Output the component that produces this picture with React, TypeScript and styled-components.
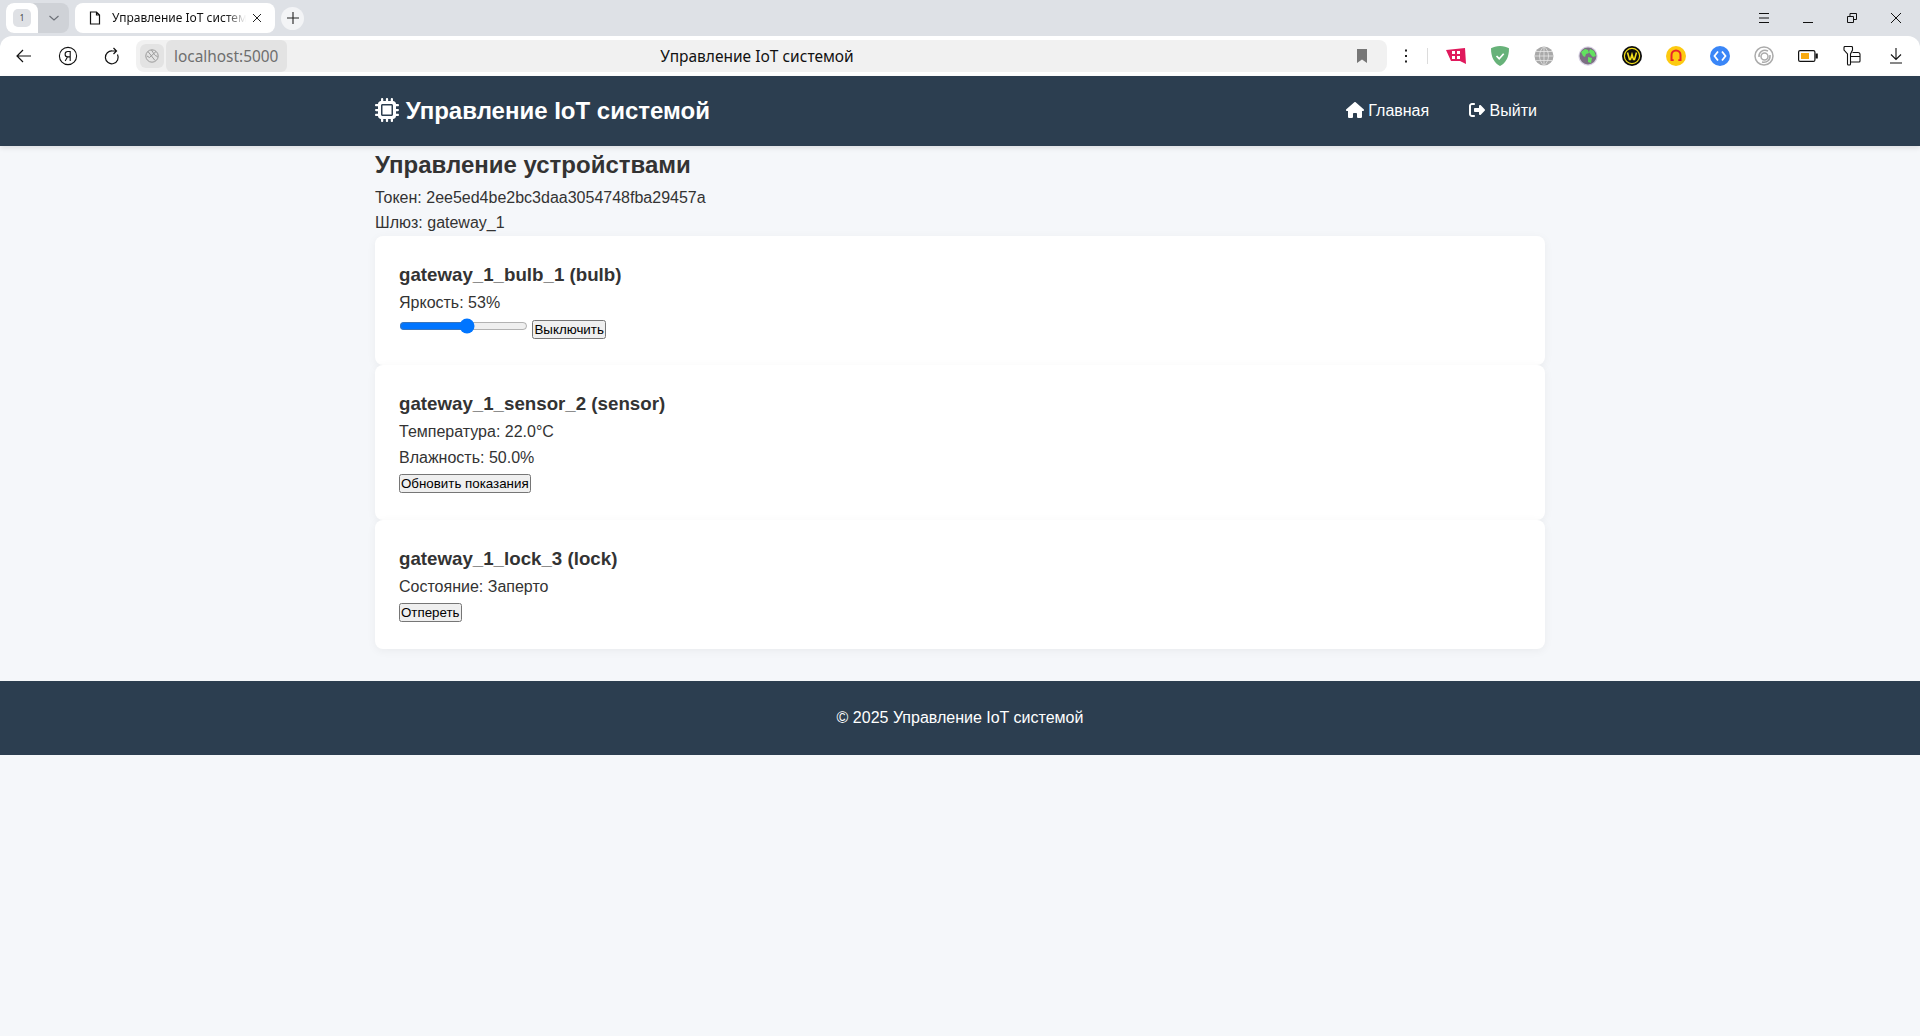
import styled, { createGlobalStyle } from 'styled-components';
import { FaHouse, FaMicrochip, FaRightFromBracket } from 'react-icons/fa6';

const GlobalStyle = createGlobalStyle`
  * {
    margin: 0;
    padding: 0;
    box-sizing: border-box;
  }
  body {
    font-family: 'Liberation Sans', Arial, sans-serif;
    line-height: 1.6;
    color: #333;
    background-color: #f5f7fa;
  }
`;

const devices = [
  { id: 'gateway_1_bulb_1', type: 'bulb' },
  { id: 'gateway_1_sensor_2', type: 'sensor' },
  { id: 'gateway_1_lock_3', type: 'lock' },
];

const App = () => {
  return (
    <>
      <GlobalStyle />
      <BrowserChrome />
      <Header>
        <HeaderInner>
          <Logo href="#">
            <FaMicrochip /> Управление IoT системой
          </Logo>
          <Nav>
            <NavItem>
              <NavLink href="#">
                <HomeIcon /> Главная
              </NavLink>
            </NavItem>
            <NavItem>
              <NavLink href="#">
                <FaRightFromBracket /> Выйти
              </NavLink>
            </NavItem>
          </Nav>
        </HeaderInner>
      </Header>
      <Main>
        <PageTitle>Управление устройствами</PageTitle>
        <p>Токен: 2ee5ed4be2bc3daa3054748fba29457a</p>
        <p>Шлюз: gateway_1</p>
        {devices.map((device) => (
          <DeviceCard key={device.id}>
            <DeviceName>
              {device.id} ({device.type})
            </DeviceName>
            {device.type === 'bulb' && (
              <>
                <p>Яркость: 53%</p>
                <div>
                  <input type="range" min="0" max="100" defaultValue="53" /> <ActionButton>Выключить</ActionButton>
                </div>
              </>
            )}
            {device.type === 'sensor' && (
              <>
                <p>Температура: 22.0°C</p>
                <p>Влажность: 50.0%</p>
                <ActionButton>Обновить показания</ActionButton>
              </>
            )}
            {device.type === 'lock' && (
              <>
                <p>Состояние: Заперто</p>
                <ActionButton>Отпереть</ActionButton>
              </>
            )}
          </DeviceCard>
        ))}
      </Main>
      <Footer>© 2025 Управление IoT системой</Footer>
    </>
  );
};

const BrowserChrome = () => {
  return (
    <ChromeWrapper>
      <TabStrip>
        <TabGroup>
          <PinnedTab>
            <PinnedBadge>1</PinnedBadge>
          </PinnedTab>
          <GroupArrow>
            <svg width="12" height="12" viewBox="0 0 12 12" fill="none" stroke="#6b6f76" strokeWidth="1.1">
              <path d="M1.5 4l4.5 4 4.5-4" />
            </svg>
          </GroupArrow>
        </TabGroup>
        <ActiveTab>
          <svg width="12" height="14" viewBox="0 0 12 14" fill="none" stroke="#111" strokeWidth="1.2">
            <path d="M1.5 1h6l3 3v9h-9zM7.5 1v3h3" />
          </svg>
          <TabTitle>Управление IoT системой</TabTitle>
          <svg width="10" height="10" viewBox="0 0 10 10" fill="none" stroke="#222" strokeWidth="1">
            <path d="M1 1l8 8M9 1l-8 8" />
          </svg>
        </ActiveTab>
        <NewTab>
          <svg width="12" height="12" viewBox="0 0 12 12" fill="none" stroke="#222" strokeWidth="1.1">
            <path d="M6 0v12M0 6h12" />
          </svg>
        </NewTab>
        <WindowControls>
          <WindowButton>
            <svg width="12" height="12" viewBox="0 0 12 12" fill="none" stroke="#111">
              <path d="M1 1.500h10M1 6h10M1 10.500h10" />
            </svg>
          </WindowButton>
          <WindowButton>
            <svg width="12" height="12" viewBox="0 0 12 12" fill="none" stroke="#111">
              <path d="M1 10.500h10" />
            </svg>
          </WindowButton>
          <WindowButton>
            <svg width="12" height="12" viewBox="0 0 12 12" fill="none" stroke="#111">
              <path d="M1.500 4.500h6v6h-6zM4 4.500v-3h6.500v6h-3" />
            </svg>
          </WindowButton>
          <WindowButton>
            <svg width="12" height="12" viewBox="0 0 12 12" fill="none" stroke="#111">
              <path d="M1 1l10 10M11 1L1 11" />
            </svg>
          </WindowButton>
        </WindowControls>
      </TabStrip>
      <Toolbar>
        <ToolButton>
          <svg width="16" height="14" viewBox="0 0 16 14" fill="none" stroke="#111" strokeWidth="1.2">
            <path d="M15 7H1M7 1L1 7l6 6" />
          </svg>
        </ToolButton>
        <ToolButton>
          <svg width="20" height="20" viewBox="0 0 20 20" fill="none" stroke="#111" strokeWidth="1.1">
            <circle cx="10" cy="10" r="8.600" />
            <path d="M12.200 15V5.500H9.800a2.600 2.600 0 000 5.400h2.400M9.600 10.800L7.200 15" />
          </svg>
        </ToolButton>
        <ToolButton>
          <svg width="16" height="18" viewBox="0 0 16 18" fill="none" stroke="#111" strokeWidth="1.2">
            <path d="M13.500 7.500A6.400 6.400 0 1 1 8.500 4H12M9.500 1l3 3-3 3" />
          </svg>
        </ToolButton>
        <AddressBar>
          <SiteChip>
            <svg width="14" height="14" viewBox="0 0 14 14" fill="none" stroke="#9a9a9a" strokeWidth="1">
              <circle cx="7" cy="7" r="6.200" />
              <path d="M3 2.500L10 11.500M11 2.500L4.500 8.500 2 7M6.500 1c2 3 3 6 6 6.500" />
            </svg>
          </SiteChip>
          <UrlChip>localhost:5000</UrlChip>
          <AddressTitle>Управление IoT системой</AddressTitle>
          <svg width="10" height="14" viewBox="0 0 10 14" fill="#777">
            <path d="M0 0h10v14L5 10.500 0 14z" />
          </svg>
        </AddressBar>
        <MenuDots>
          <svg width="4" height="14" viewBox="0 0 4 14" fill="#222">
            <rect x="1" y="0.500" width="2" height="2" />
            <rect x="1" y="6" width="2" height="2" />
            <rect x="1" y="11.500" width="2" height="2" />
          </svg>
        </MenuDots>
        <ToolbarDivider />
        <ExtensionIcons />
      </Toolbar>
    </ChromeWrapper>
  );
};

const ExtensionIcons = () => {
  return (
    <Extensions>
      <ExtensionSlot>
        <svg width="20" height="18" viewBox="0 0 20 18">
          <path d="M0 3L19 1l1 16-6-3H5z" fill="#e0195c" />
          <path d="M6 4h8v8H6z" fill="#fff" />
          <path d="M9 4h2v8H9zM6 7h8v2H6z" fill="#e0195c" />
        </svg>
      </ExtensionSlot>
      <ExtensionSlot>
        <svg width="20" height="20" viewBox="0 0 20 20">
          <path d="M10 0c3.500 0 7 1 9 2.300C19 11 16 17 10 20 4 17 1 11 1 2.300 3 1 6.500 0 10 0z" fill="#67b279" />
          <path d="M6.500 10l2.700 2.700 4.500-5" fill="none" stroke="#fff" strokeWidth="1.700" />
        </svg>
      </ExtensionSlot>
      <ExtensionSlot>
        <svg width="20" height="20" viewBox="0 0 20 20" fill="none">
          <circle cx="10" cy="10" r="9.500" fill="#a9a9a9" />
          <path d="M0.500 10h19M2 5.500h16M2 14.500h16M10 0.500v19M10 0.500c-6 5-6 14 0 19M10 0.500c6 5 6 14 0 19" stroke="#e6e6e6" strokeWidth="0.800" />
        </svg>
      </ExtensionSlot>
      <ExtensionSlot>
        <svg width="20" height="20" viewBox="0 0 20 20">
          <circle cx="10" cy="10" r="9.700" fill="#d9d3e4" />
          <circle cx="10" cy="10" r="8.500" fill="#7c6f83" />
          <path d="M3 6l4-3 3 1 1 3-3 1-1 3-2-1zM12 3l4 2 2 5-3 1-2-2-2-3zM10 11l4 1-1 5-3-1z" fill="#62e35f" />
        </svg>
      </ExtensionSlot>
      <ExtensionSlot>
        <svg width="20" height="20" viewBox="0 0 20 20">
          <circle cx="10" cy="10" r="10" fill="#0d0d0d" />
          <circle cx="10" cy="10" r="7.600" fill="none" stroke="#f2df1a" strokeWidth="1.200" />
          <path d="M5.500 6.500l2 7h1l1.500-5 1.500 5h1l2-7" fill="none" stroke="#f2df1a" strokeWidth="1.600" />
        </svg>
      </ExtensionSlot>
      <ExtensionSlot>
        <svg width="20" height="20" viewBox="0 0 20 20">
          <circle cx="10" cy="10" r="10" fill="#fdca10" />
          <path d="M4.500 15V9a5.500 5.500 0 0111 0v6h-3.200v-1.800h1.200V9a3.500 3.500 0 00-7 0v4.200h1.200V15z" fill="#e8262a" />
        </svg>
      </ExtensionSlot>
      <ExtensionSlot>
        <svg width="20" height="20" viewBox="0 0 20 20">
          <circle cx="10" cy="10" r="10" fill="#3a86f7" />
          <path d="M8 5.500L4.500 10 8 14.500M12 5.500l3.500 4.500-3.500 4.500" fill="none" stroke="#fff" strokeWidth="1.800" />
        </svg>
      </ExtensionSlot>
      <ExtensionSlot>
        <svg width="20" height="20" viewBox="0 0 20 20" fill="none" stroke="#ababab" strokeWidth="1.500">
          <circle cx="10" cy="10" r="9" />
          <circle cx="10.500" cy="10.500" r="3.500" />
          <path d="M5 11C4.500 6 9 3 14 5M16 9c.5 5-3 8-8 7" />
        </svg>
      </ExtensionSlot>
      <ExtensionSlot>
        <svg width="20" height="12" viewBox="0 0 20 12">
          <rect x="0.600" y="0.600" width="16.300" height="10.800" rx="1.500" fill="#fff" stroke="#111" strokeWidth="1.200" />
          <rect x="3" y="3" width="8" height="6" fill="#f8a90e" />
          <rect x="17.500" y="3.500" width="2.300" height="5" fill="#111" />
        </svg>
      </ExtensionSlot>
      <ExtensionSlot>
        <svg width="18" height="20" viewBox="0 0 18 20" fill="none" stroke="#111" strokeWidth="1.100">
          <path d="M1 1.500Q1 .5 2 .5h6.500q1 0 1 1V4L7.500 8v10q0 1-1 1h-1q-1 0-1-1V8L1 4z" />
          <path d="M9.500 6.500H15q2 0 2 2V15q0 1-1 1H7.500M7.500 10.500H17" />
        </svg>
      </ExtensionSlot>
      <ExtensionSlot>
        <svg width="14" height="16" viewBox="0 0 14 16" fill="none" stroke="#111" strokeWidth="1.100">
          <path d="M7 0v11.500M2 6.500l5 5 5-5M1 15h12" />
        </svg>
      </ExtensionSlot>
    </Extensions>
  );
};

export default App;

const ChromeWrapper = styled.div`
  height: 76px;
  background-color: #dee1e6;
`;
const TabStrip = styled.div`
  display: flex;
  align-items: center;
  height: 36px;
  padding: 0 2px 0 6px;
  font-family: 'Noto Sans', sans-serif;
`;
const TabGroup = styled.div`
  display: flex;
  width: 63px;
  height: 30px;
  border-radius: 8px;
  background-color: #cfd2d7;
`;
const PinnedTab = styled.div`
  display: flex;
  justify-content: center;
  align-items: center;
  width: 32px;
  border-radius: 8px 8px 0 8px;
  background-color: #fff;
`;
const PinnedBadge = styled.span`
  width: 18px;
  height: 18px;
  border-radius: 5px;
  background-color: #dfe1e5;
  color: #444;
  font-size: 8px;
  line-height: 18px;
  text-align: center;
`;
const GroupArrow = styled.div`
  display: flex;
  flex: 1;
  justify-content: center;
  align-items: center;
`;
const ActiveTab = styled.div`
  display: flex;
  align-items: center;
  width: 200px;
  height: 30px;
  margin-left: 6px;
  padding: 0 13px 0 14px;
  border-radius: 8px;
  background-color: #fff;
`;
const TabTitle = styled.span`
  flex: 1;
  overflow: hidden;
  margin: 0 6px 0 11px;
  color: #111;
  font-size: 12px;
  white-space: nowrap;
  -webkit-mask-image: linear-gradient(to right, #000 85%, transparent);
  mask-image: linear-gradient(to right, #000 85%, transparent);
`;
const NewTab = styled.div`
  display: flex;
  justify-content: center;
  align-items: center;
  width: 23px;
  height: 23px;
  margin-left: 6px;
  border-radius: 50%;
  background-color: #f3f4f6;
`;
const WindowControls = styled.div`
  display: flex;
  margin-left: auto;
`;
const WindowButton = styled.div`
  display: flex;
  justify-content: center;
  align-items: center;
  width: 44px;
  height: 36px;
`;
const Toolbar = styled.div`
  display: flex;
  align-items: center;
  height: 40px;
  padding-left: 2px;
  border-radius: 12px 12px 0 0;
  background-color: #fff;
  font-family: 'Noto Sans', sans-serif;
`;
const ToolButton = styled.div`
  display: flex;
  justify-content: center;
  align-items: center;
  width: 44px;
  height: 40px;
`;
const AddressBar = styled.div`
  display: flex;
  align-items: center;
  width: 1251px;
  height: 32px;
  margin-left: 2px;
  padding-right: 20px;
  border-radius: 8px;
  background-color: #f1f1f1;
`;
const SiteChip = styled.div`
  display: flex;
  justify-content: center;
  align-items: center;
  width: 24px;
  height: 24px;
  margin-left: 4px;
  border-radius: 6px;
  background-color: #e3e3e3;
`;
const UrlChip = styled.div`
  width: 121px;
  height: 32px;
  margin-left: 2px;
  padding-left: 8px;
  border-radius: 6px;
  background-color: #e3e3e3;
  color: #6e6e6e;
  font-size: 15.400px;
  line-height: 33px;
`;
const AddressTitle = styled.div`
  flex: 1;
  padding-right: 130px;
  color: #111;
  font-size: 15.500px;
  text-align: center;
`;
const MenuDots = styled.div`
  display: flex;
  justify-content: center;
  width: 26px;
  margin-left: 6px;
`;
const ToolbarDivider = styled.div`
  width: 1px;
  height: 16px;
  margin-left: 8px;
  background-color: #dcdcdc;
`;
const Extensions = styled.div`
  display: flex;
  margin-left: 6px;
`;
const ExtensionSlot = styled.div`
  display: flex;
  justify-content: center;
  align-items: center;
  width: 44px;
  height: 40px;
`;
const Header = styled.header`
  background-color: #2c3e50;
  box-shadow: 0 2px 5px rgba(0, 0, 0, 0.1);
`;
const HeaderInner = styled.div`
  display: flex;
  justify-content: space-between;
  align-items: center;
  width: 1170px;
  margin: 0 auto;
  padding: 16px 0;
`;
const Logo = styled.a`
  color: #fff;
  font-size: 24px;
  font-weight: bold;
  text-decoration: none;

  svg {
    vertical-align: -3px;
  }
`;
const Nav = styled.nav`
  display: flex;
  gap: 24px;
`;
const NavItem = styled.span`
  display: block;
`;
const NavLink = styled.a`
  padding: 8px;
  color: #fff;
  font-size: 16px;
  text-decoration: none;

  svg {
    vertical-align: -2px;
  }
`;
const HomeIcon = styled(FaHouse)`
  width: 1.125em;
`;
const Main = styled.main`
  width: 1170px;
  margin: 0 auto 32px;
`;
const PageTitle = styled.h2`
  font-size: 24px;
`;
const DeviceCard = styled.section`
  padding: 24px;
  border-radius: 8px;
  background-color: #fff;
  box-shadow: 0 2px 10px rgba(0, 0, 0, 0.05);
`;
const DeviceName = styled.h3`
  font-size: 18.720px;
`;
const ActionButton = styled.button`
  font-family: 'Liberation Sans', Arial, sans-serif;
`;
const Footer = styled.footer`
  padding: 24px;
  background-color: #2c3e50;
  color: #fff;
  text-align: center;
`;
